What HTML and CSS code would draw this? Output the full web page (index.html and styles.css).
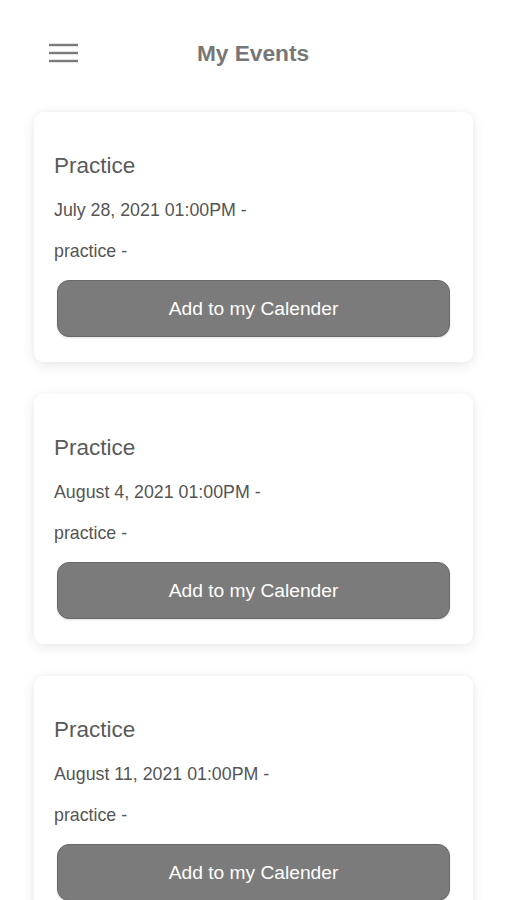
FILE: index.html
```html
<!DOCTYPE html>
<html>
<head>
<meta charset="utf-8">
<link rel="stylesheet" href="styles.css">
</head>
<body>
<header class="topbar">
  <button class="menu" aria-label="Menu">
    <svg width="30" height="20" viewBox="0 0 30 20"><g stroke="#7a7a7a" stroke-width="2.4" stroke-linecap="butt"><line x1="0" y1="2" x2="29" y2="2"/><line x1="0" y1="10" x2="29" y2="10"/><line x1="0" y1="18" x2="29" y2="18"/></g></svg>
  </button>
  <h1 class="title">My Events</h1>
</header>
<main class="list">
  <section class="card">
    <h2 class="event-name">Practice</h2>
    <p class="event-line">July 28, 2021 01:00PM -</p>
    <p class="event-line">practice -</p>
    <button class="add-btn">Add to my Calender</button>
  </section>
  <section class="card">
    <h2 class="event-name">Practice</h2>
    <p class="event-line">August 4, 2021 01:00PM -</p>
    <p class="event-line">practice -</p>
    <button class="add-btn">Add to my Calender</button>
  </section>
  <section class="card">
    <h2 class="event-name">Practice</h2>
    <p class="event-line">August 11, 2021 01:00PM -</p>
    <p class="event-line">practice -</p>
    <button class="add-btn">Add to my Calender</button>
  </section>
</main>
</body>
</html>
```
FILE: styles.css
```css
* { box-sizing: border-box; }
html, body { margin: 0; padding: 0; background: #fff; }
body {
  font-family: "Liberation Sans", Arial, sans-serif;
  width: 506px;
  height: 900px;
  overflow: hidden;
}
.topbar {
  position: relative;
  height: 112px;
  display: flex;
  justify-content: center;
  padding-top: 39px;
}
.menu {
  position: absolute;
  left: 49px;
  top: 43px;
  border: 0;
  padding: 0;
  background: none;
  line-height: 0;
}
.title {
  margin: 0;
  font-size: 22.7px;
  line-height: 28px;
  font-weight: bold;
  color: #777;
}
.list {
  display: flex;
  flex-direction: column;
  gap: 32px;
  padding: 0 33px 0 34px;
}
.card {
  background: #fff;
  border-radius: 9px;
  box-shadow: 0 3px 14px rgba(0,0,0,0.09), 0 0 4px rgba(0,0,0,0.03);
  padding: 40px 20px 25px 20px;
  display: flex;
  flex-direction: column;
}
.event-name {
  margin: 0 0 19px;
  font-size: 22.5px;
  line-height: 28px;
  font-weight: normal;
  color: #5a5a5a;
}
.event-line {
  margin: 0 0 19px;
  font-size: 17.8px;
  line-height: 22px;
  color: #555;
}
.event-line + .event-line { margin-bottom: 18px; }
.add-btn {
  margin: 0 3px;
  height: 57px;
  border: 1px solid #686868;
  border-radius: 12px;
  background: #7b7b7b;
  color: #fff;
  font-family: "Liberation Sans", Arial, sans-serif;
  font-size: 19.2px;
  padding-top: 2px;
  box-shadow: 0 1px 2px rgba(0,0,0,0.12);
}
```
